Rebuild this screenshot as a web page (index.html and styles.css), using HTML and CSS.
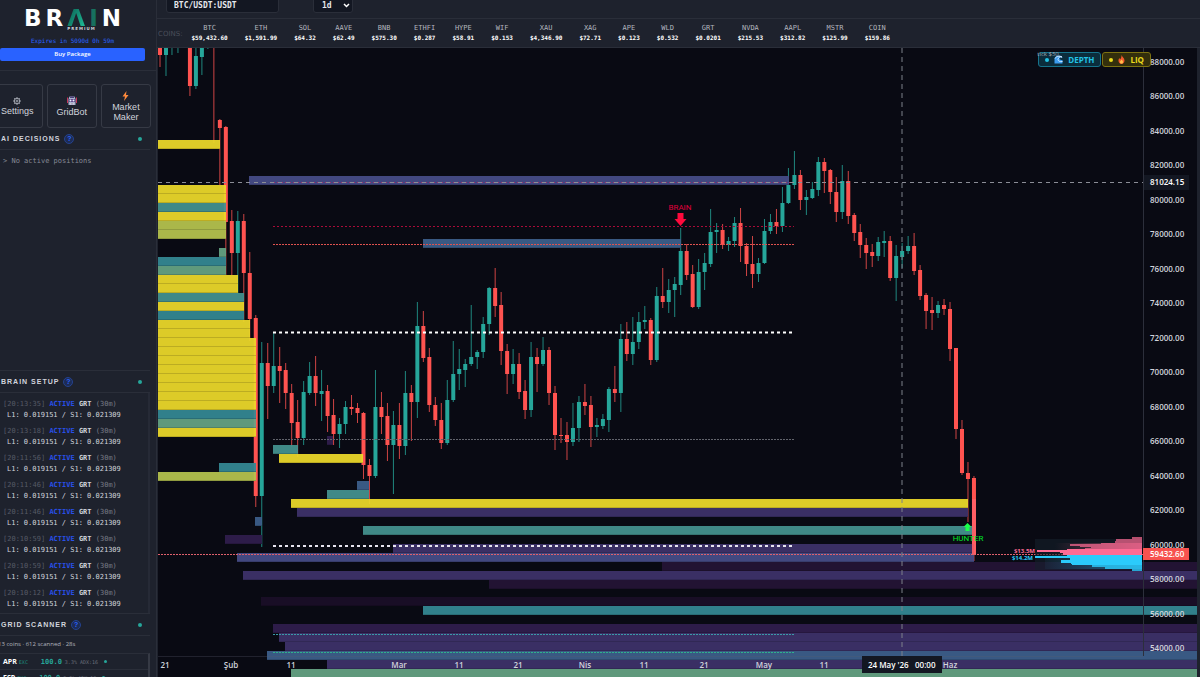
FILE: index.html
```html
<!DOCTYPE html>
<html lang="tr">
<head>
    <meta charset="UTF-8">
    <meta name="viewport" content="width=device-width, initial-scale=1.0">
    <title>BRAIN Premium</title>
    <link rel="stylesheet" href="styles.css">
</head>
<body>
    <aside class="sidebar">
        <div class="brand">
            <div class="logo"><span>B</span><span>R</span><span class="logo-accent">Λ</span><span class="logo-bar">I</span><span>N</span></div>
            <div class="logo-sub">PREMIUM</div>
            <div class="expires">Expires in 5090d 0h 59m</div>
            <button class="buy">Buy Package</button>
        </div>

        <div class="tools">
            <button class="tool">
                <svg width="8" height="8" viewBox="0 0 16 16"><circle cx="8" cy="8" r="5.5" fill="none" stroke="#c4c8d2" stroke-width="1.6"/><circle cx="8" cy="8" r="2" fill="none" stroke="#c4c8d2" stroke-width="1.4"/><path d="M8 0v2.5M8 13.500v2.500M0 8h2.500M13.500 8H16M2.300 2.300l1.800 1.800M11.900 11.900l1.800 1.800M2.300 13.700l1.800-1.800M11.900 4.100l1.800-1.800" stroke="#c4c8d2" stroke-width="1.400"/></svg>
                Settings
            </button>
            <button class="tool">
                <svg width="10" height="10" viewBox="0 0 20 20"><path d="M5 1h10l2 5v12H3V6z" fill="#a9b4cf"/><path d="M6 1h8v3H6z" fill="#4a3f78"/><rect x="4" y="6" width="12" height="6" rx="1" fill="#5b3d83"/><circle cx="7" cy="9" r="2" fill="#e8f2ff"/><circle cx="13" cy="9" r="2" fill="#e8f2ff"/><path d="M0 3h2v11H0zM18 3h2v11h-2z" fill="#c9335c"/><path d="M6 14h8v3H6z" fill="#f2f4fa"/><path d="M8 14v3M10 14v3M12 14v3" stroke="#54456f"/></svg>
                GridBot
            </button>
            <button class="tool">
                <svg width="7" height="10" viewBox="0 0 14 20"><path d="M9 0L1 11h5l-2 9 9-12H8z" fill="#ff8a3c"/></svg>
                Market Maker
            </button>
        </div>

        <section class="panel panel-grow">
            <h2>AI DECISIONS <button class="help">?</button><i class="dot"></i></h2>
            <p class="empty">&gt; No active positions</p>
        </section>

        <section class="panel">
            <h2>BRAIN SETUP <button class="help">?</button><i class="dot"></i></h2>
            <ul class="log">
                <li><time>[20:13:35]</time> <b class="active">ACTIVE</b> <b>GRT</b> <em>(30m)</em><span>L1: 0.019151 / S1: 0.021309</span></li>
                <li><time>[20:13:18]</time> <b class="active">ACTIVE</b> <b>GRT</b> <em>(30m)</em><span>L1: 0.019151 / S1: 0.021309</span></li>
                <li><time>[20:11:56]</time> <b class="active">ACTIVE</b> <b>GRT</b> <em>(30m)</em><span>L1: 0.019151 / S1: 0.021309</span></li>
                <li><time>[20:11:46]</time> <b class="active">ACTIVE</b> <b>GRT</b> <em>(30m)</em><span>L1: 0.019151 / S1: 0.021309</span></li>
                <li><time>[20:11:46]</time> <b class="active">ACTIVE</b> <b>GRT</b> <em>(30m)</em><span>L1: 0.019151 / S1: 0.021309</span></li>
                <li><time>[20:10:59]</time> <b class="active">ACTIVE</b> <b>GRT</b> <em>(30m)</em><span>L1: 0.019151 / S1: 0.021309</span></li>
                <li><time>[20:10:59]</time> <b class="active">ACTIVE</b> <b>GRT</b> <em>(30m)</em><span>L1: 0.019151 / S1: 0.021309</span></li>
                <li><time>[20:10:12]</time> <b class="active">ACTIVE</b> <b>GRT</b> <em>(30m)</em><span>L1: 0.019151 / S1: 0.021309</span></li>
            </ul>
        </section>

        <section class="panel panel-scan">
            <h2>GRID SCANNER <button class="help">?</button><i class="dot"></i></h2>
            <p class="summary">13 coins · 612 scanned · 28s</p>
            <ul class="scan">
                <li><b>APR</b><small>EXC</small><strong>100.0</strong><span>3.3% ADX:16</span><i class="dot"></i></li>
                <li><b>ESP</b><small>EXC</small><strong>100.0</strong><span>3.3% ADX:18</span><i class="dot"></i></li>
            </ul>
        </section>
    </aside>

    <main class="main">
        <div class="toolbar">
            <input class="symbol" type="text" value="BTC/USDT:USDT" aria-label="Symbol">
            <div class="select-wrap">
                <select class="interval" aria-label="Interval"><option>1d</option></select>
                <svg width="7" height="5" viewBox="0 0 7 5"><path d="M1 1l2.500 2.500L6 1" fill="none" stroke="#fff" stroke-width="1.500"/></svg>
            </div>
        </div>

        <div class="coins">
            <span class="coins-label">COINS:</span>
            <div class="coin">BTC<b>$59,432.60</b></div>
            <div class="coin">ETH<b>$1,591.99</b></div>
            <div class="coin">SOL<b>$64.32</b></div>
            <div class="coin">AAVE<b>$62.49</b></div>
            <div class="coin">BNB<b>$575.30</b></div>
            <div class="coin">ETHFI<b>$0.287</b></div>
            <div class="coin">HYPE<b>$58.91</b></div>
            <div class="coin">WIF<b>$0.153</b></div>
            <div class="coin">XAU<b>$4,346.90</b></div>
            <div class="coin">XAG<b>$72.71</b></div>
            <div class="coin">APE<b>$0.123</b></div>
            <div class="coin">WLD<b>$0.532</b></div>
            <div class="coin">GRT<b>$0.0201</b></div>
            <div class="coin">NVDA<b>$215.53</b></div>
            <div class="coin">AAPL<b>$312.82</b></div>
            <div class="coin">MSTR<b>$125.99</b></div>
            <div class="coin">COIN<b>$159.86</b></div>
        </div>

        <div class="chart">
            <svg id="chart" viewBox="158 48 1039 629" preserveAspectRatio="xMinYMin slice"></svg>
            <div class="overlay">
                <span class="tick">tick $50</span>
                <button class="toggle depth"><i></i><svg width="9" height="9" viewBox="0 0 18 18"><path d="M1 17V8c0-4 4-7 9-7 4 0 7 2 7 5-2-2-5-2-6 0-1 3 2 4 6 4v7z" fill="#3b9cf0"/><path d="M2 7c2-4 8-6 14-3-4-1-8 1-8 5 0 3 4 5 9 4" fill="none" stroke="#cfeaff" stroke-width="2"/></svg>DEPTH</button>
                <button class="toggle liq"><i></i><svg width="7" height="9" viewBox="0 0 14 18"><path d="M7 0c1 4 6 6 6 11 0 4-3 7-6 7s-6-3-6-7c0-2 1-4 2-5l1 3c2-2 3-5 3-9z" fill="#f4592b"/><path d="M7 9c2 2 3 3 3 5s-1 3-3 3-3-1-3-3 2-3 3-5z" fill="#ffc04a"/></svg>LIQ</button>
            </div>
        </div>
    </main>
    <script src="chart.js"></script>
</body>
</html>
```
FILE: styles.css
```css
* { box-sizing: border-box; }
body {
    margin: 0;
    height: 100vh;
    display: flex;
    overflow: hidden;
    background: #1e222d;
    color: #d1d4dc;
    font-family: "Liberation Sans", Arial, sans-serif;
}
button, input, select { font-family: inherit; margin: 0; }
h2, p, ul { margin: 0; padding: 0; }
ul { list-style: none; }

/* Sidebar */
.sidebar {
    width: 157px;
    flex-shrink: 0;
    display: flex;
    flex-direction: column;
    overflow: hidden;
    border-right: 1px solid #2a2e39;
}
.brand {
    height: 71px;
    padding: 9px 11px 0 0;
    border-bottom: 1px solid #2a2e39;
    text-align: center;
}
.logo {
    display: flex;
    justify-content: center;
    gap: 4px;
    font: bold 23px/18px "DejaVu Sans", sans-serif;
    color: #fff;
}
.logo-accent {
    background: linear-gradient(120deg, #0b5c50, #1fc09a);
    background-clip: text;
    color: transparent;
}
.logo-bar { color: #17705f; }
.logo-sub {
    font: bold 4px/4px "DejaVu Sans", sans-serif;
    letter-spacing: 1px;
    padding-left: 18px;
}
.expires {
    margin-top: 6px;
    font: 6px/8px "DejaVu Sans Mono", monospace;
    color: #2962ff;
}
.buy {
    display: block;
    width: 100%;
    height: 13px;
    margin-top: 3px;
    padding: 0;
    border: none;
    border-radius: 2px;
    background: #2962ff;
    color: #fff;
    font: 600 6px/13px "Open Sans", sans-serif;
}
.tools {
    display: grid;
    grid-template-columns: repeat(3, 1fr);
    gap: 4px;
    margin: 13px 5px 0 -8px;
}
.tool {
    display: flex;
    flex-direction: column;
    align-items: center;
    justify-content: center;
    gap: 1px;
    height: 44px;
    padding: 0 8px;
    border: 1px solid #363a45;
    border-radius: 3px;
    background: transparent;
    color: #d1d4dc;
    font-size: 9px;
    line-height: 10px;
}
.panel { margin-right: 6px; }
.panel-grow { flex: 1; }
.panel h2 {
    display: flex;
    align-items: center;
    gap: 4px;
    height: 22px;
    padding: 0 8px 0 1px;
    border-bottom: 1px solid #2a2e39;
    font-size: 7px;
    letter-spacing: 1px;
}
.panel + .panel { border-top: 1px solid #2a2e39; }
.help {
    width: 10px;
    height: 10px;
    padding: 0;
    border: 1px solid #24428f;
    border-radius: 50%;
    background: #1d2c55;
    color: #2962ff;
    font-size: 7px;
    font-weight: bold;
    line-height: 8px;
}
.dot {
    width: 4px;
    height: 4px;
    border-radius: 50%;
    background: #26a69a;
}
h2 .dot { margin-left: auto; }
.empty, .log { font: 7px/12px "DejaVu Sans Mono", monospace; }
.empty { padding: 5px 3px; color: #868a96; }
.log {
    height: 220px;
    padding-top: 5px;
    overflow: hidden;
    border-right: 2px solid #262a36;
}
.log li { height: 27px; padding-left: 3px; white-space: nowrap; }
.log time { color: #565a66; }
.log em { font-style: normal; color: #787b86; }
.log .active { color: #2950e8; }
.log span { display: block; padding-left: 4px; line-height: 11px; }
.panel-scan { height: 64px; overflow: hidden; }
.summary {
    margin-left: -2px;
    font: 6px/17px "Open Sans", sans-serif;
    color: #b2b5be;
}
.scan { border-top: 1px solid #2a2e39; border-right: 2px solid #363a45; }
.scan li {
    display: flex;
    align-items: center;
    height: 16px;
    padding-left: 3px;
    border-bottom: 1px solid #2a2e39;
    font: 5px/8px "DejaVu Sans Mono", monospace;
    color: #6a6e7a;
}
.scan b { font: bold 7px/8px "Open Sans", sans-serif; color: #fff; }
.scan small { width: 24px; padding-left: 2px; font-size: 5px; color: #1c8a7c; }
.scan strong { width: 24px; font-size: 7px; color: #26a69a; }
.scan .dot { width: 3px; height: 3px; margin-left: 6px; }

/* Top bars */
.main {
    flex: 1;
    min-width: 0;
    display: flex;
    flex-direction: column;
    font-family: "DejaVu Sans Mono", monospace;
}
.toolbar {
    display: flex;
    gap: 34px;
    height: 19px;
    padding-left: 9px;
    border-bottom: 1px solid #2a2e39;
}
.symbol, .interval {
    display: block;
    height: 20px;
    margin-top: -7px;
    border: 1px solid #2a2e39;
    border-radius: 3px;
    background: #131722;
    color: #e6e8ee;
    font-size: 8px;
    font-weight: bold;
}
.symbol { width: 113px; padding: 4px 7px 0; }
.select-wrap { position: relative; }
.interval {
    width: 40px;
    padding: 4px 0 0 8px;
    appearance: none;
}
.select-wrap svg { position: absolute; right: 3px; top: 3px; }
.coins {
    display: flex;
    align-items: center;
    gap: 17px;
    height: 29px;
    padding-left: 1px;
    border-bottom: 1px solid #2a2e39;
    white-space: nowrap;
}
.coins-label {
    margin: 2px -8px 0 0;
    font: 7px/8px "DejaVu Sans", sans-serif;
    color: #4a4e5a;
}
.coin {
    text-align: center;
    font-size: 7px;
    line-height: 10px;
    color: #b2b5be;
}
.coin b { display: block; font-size: 6px; color: #fff; }

/* Chart */
.chart {
    position: relative;
    flex: 1;
    min-height: 0;
    margin: 0 3px 0 1px;
    overflow: hidden;
    background: #090a13;
}
#chart { display: block; width: 100%; height: 100%; }
.axis-text { font: 600 8px "Open Sans", sans-serif; fill: #d1d4dc; }
.axis-active { fill: #fff; }
.marker { font: 8px Roboto, sans-serif; text-anchor: middle; }
.depth-sum { font: bold 6px "Open Sans", sans-serif; text-anchor: end; }
.overlay {
    position: absolute;
    top: 4px;
    right: 46px;
    display: flex;
    gap: 1px;
}
.tick {
    position: absolute;
    left: -1px;
    top: -2px;
    font: 6px/8px "Open Sans", sans-serif;
    color: #a2a6b0;
}
.toggle {
    display: flex;
    align-items: center;
    gap: 5px;
    height: 15px;
    padding: 0 6px;
    border: 1px solid;
    border-radius: 3px;
    font: bold 8px/12px "Open Sans", sans-serif;
}
.toggle i { width: 4px; height: 4px; border-radius: 50%; background: currentColor; }
.depth { background: #0b2d3c; border-color: #16738c; color: #22c3e6; }
.liq { background: #332f0c; border-color: #7d7212; color: #eadb1c; }
```
FILE: chart.js
```js
const svg = document.getElementById('chart');
const NS = 'http://www.w3.org/2000/svg';

const UP = '#26a69a';
const DOWN = '#ff5350';
const C = {
    yellow: '#ebd829', olive: '#b5c24e', green: '#65a383', teal: '#44928e', cyan: '#348893',
    blue: '#3d5f8a', indigo: '#464c87', violet: '#3e3269', plum: '#301e4c', dark: '#241435', faint: '#1b0f27'
};

// one row per day: direction, high, body top, body bottom, low
const candles = `
d 40 40 55 67|u 40 40 55 76|u 40 40 40 55|u 40 40 40 53|u 40 40 40 41|d 40 40 86 96|u 40 56 86 89|u 40 40 57 75|u 40 40 40 49|d 40 40 121 143
d 119 120 128 185|d 126 127 222 275|d 210 221 253 275|u 211 221 253 294|d 214 221 273 322|d 252 273 319 341|d 315 318 496 507|u 342 363 496 547|d 343 363 386 419|u 332 366 386 393
d 347 366 371 403|d 363 370 393 409|d 384 393 423 447|d 400 422 438 457|u 381 392 438 445|u 362 376 393 395|d 356 376 393 406|u 370 391 394 421|d 385 391 416 432|d 399 415 434 445
u 418 424 434 448|u 401 407 424 434|d 395 407 409 415|d 403 408 413 423|d 412 413 465 479|d 459 465 476 504|u 370 407 476 478|d 392 407 417 434|d 403 416 445 461|u 411 425 445 494
d 403 425 446 459|u 371 393 446 455|d 385 393 402 441|u 302 326 402 418|d 311 326 358 362|d 348 357 405 412|d 397 405 420 426|d 403 420 443 449|u 380 400 443 445|u 341 374 400 402
u 349 369 374 390|u 359 364 370 387|u 305 357 364 366|u 350 352 357 369|u 317 324 352 358|u 287 288 324 335|d 268 288 306 317|d 292 305 351 365|d 344 351 374 394|u 349 364 374 384
d 353 364 392 399|d 380 391 410 419|u 342 357 410 417|d 348 357 364 392|u 337 350 364 366|d 347 350 393 405|d 386 393 435 450|d 418 435 436 443|d 422 435 442 460|u 403 428 442 446
u 396 402 428 442|d 384 402 406 415|d 396 405 427 447|u 418 425 427 437|u 414 419 426 429|u 387 389 420 432|d 366 389 393 402|u 324 339 393 412|d 322 339 354 361|u 317 342 354 365
u 312 322 342 349|u 306 320 322 329|d 318 320 360 365|u 287 296 360 362|d 268 296 302 308|u 279 290 302 313|u 277 284 290 317|u 228 251 285 295|d 244 251 275 280|d 265 274 307 308
u 259 272 307 309|u 253 263 272 290|u 209 232 264 267|u 223 230 232 253|d 224 230 245 249|u 237 241 244 251|u 217 223 241 247|d 208 223 246 262|d 243 246 264 276|d 236 264 274 288
u 258 263 274 282|u 219 231 263 264|u 214 222 231 234|d 209 222 226 234|u 187 203 226 232|u 168 185 203 204|u 151 175 185 189|d 170 175 200 210|u 190 197 200 215|u 182 189 198 199
u 157 162 190 196|d 158 162 171 193|d 169 170 192 204|d 177 192 212 222|u 165 181 212 219|d 171 181 216 224|d 213 215 233 241|d 224 232 245 258|d 238 245 253 269|d 244 252 256 267
u 237 242 256 261|u 231 241 243 257|d 236 241 278 281|u 245 256 278 301|u 243 251 257 268|u 236 246 251 254|d 233 246 271 275|d 265 270 296 300|d 293 295 311 329|d 297 310 313 330
u 301 305 313 318|d 299 305 309 315|d 302 309 349 361|d 348 348 429 439|d 420 429 473 475|d 462 473 479 522|d 476 478 555 561
`.trim().split(/[|\n]/).map(row => row.split(' '));

// liquidation levels: colour, x from, x to, y, rows
const bands = [
    ['yellow', 158, 220, 140, 1], ['indigo', 249, 789, 176, 1], ['yellow', 158, 226, 185, 2],
    ['teal', 158, 226, 203, 1], ['yellow', 158, 226, 212, 1], ['olive', 158, 226, 221, 2],
    ['blue', 423, 681, 239, 1], ['green', 219, 226, 248, 1], ['cyan', 158, 226, 257, 1],
    ['green', 158, 226, 266, 1], ['yellow', 158, 238, 275, 2], ['teal', 158, 244, 293, 1],
    ['yellow', 158, 244, 302, 1], ['cyan', 158, 244, 311, 1], ['yellow', 158, 250, 320, 2],
    ['yellow', 158, 256, 338, 8], ['cyan', 158, 256, 410, 1], ['green', 158, 256, 419, 1],
    ['yellow', 158, 256, 428, 1], ['plum', 327, 333, 436, 1], ['teal', 273, 298, 445, 1],
    ['yellow', 279, 363, 454, 1], ['cyan', 219, 256, 463, 1], ['olive', 158, 256, 472, 1],
    ['blue', 357, 369, 481, 1], ['teal', 327, 369, 490, 1], ['yellow', 291, 968, 499, 1],
    ['violet', 297, 968, 508, 1], ['blue', 255, 262, 517, 1], ['teal', 363, 974, 526, 1],
    ['plum', 225, 262, 535, 1], ['violet', 393, 974, 544, 1], ['indigo', 237, 974, 553, 1],
    ['dark', 662, 1197, 562, 1], ['violet', 243, 1197, 571, 1], ['dark', 489, 1197, 580, 1],
    ['faint', 261, 1197, 597, 1], ['cyan', 423, 1197, 606, 1], ['plum', 273, 1197, 624, 1],
    ['violet', 279, 1197, 633, 1], ['violet', 285, 1197, 642, 1], ['blue', 267, 1197, 651, 1],
    ['violet', 327, 1197, 660, 1], ['green', 291, 1197, 669, 1]
];

// order book depth: y, height, left edge
const asks = [[537, 2, 1132], [539, 2, 1116], [541, 2, 1115], [543, 1, 1101], [544, 2, 1070], [546, 1, 1080], [547, 1, 1091], [548, 1, 1085], [549, 1, 1067], [550, 2, 1037], [552, 1, 1060], [553, 2, 1063]];
const bids = [[555, 1, 1067], [556, 2, 1035], [558, 2, 1070], [560, 3, 1061], [563, 1, 1071], [564, 1, 1072], [565, 2, 1092], [567, 2, 1105], [569, 2, 1132]];

const times = [[165, '21'], [231, 'Şub'], [291, '11'], [399, 'Mar'], [459, '11'], [518, '21'], [585, 'Nis'], [644, '11'], [704, '21'], [764, 'May'], [824, '11'], [950, 'Haz']];

function add(tag, attrs, text) {
    const el = document.createElementNS(NS, tag);
    for (const key in attrs) el.setAttribute(key, attrs[key]);
    if (text) el.textContent = text;
    svg.appendChild(el);
    return el;
}

function rect(x, y, width, height, fill, opacity = 1) {
    add('rect', { x, y, width, height, fill, opacity });
}

function line(x1, y1, x2, y2, stroke, dash, width = 1) {
    add('line', { x1, y1, x2, y2, stroke, 'stroke-width': width, 'stroke-dasharray': dash });
}

function drawCandles() {
    candles.forEach(([dir, high, top, bottom, low], i) => {
        const x = 160 + i * 5.985;
        const color = dir === 'u' ? UP : DOWN;
        rect(x - 0.5, +high, 1, low - high, color, 0.8);
        if (bottom > top) rect(x - 2, +top, 4, bottom - top, color);
    });
}

function drawBands() {
    bands.forEach(([color, from, to, y, rows]) => {
        for (let i = 0; i < rows; i++) {
            rect(from, y + i * 9, to - from, 9, C[color], 0.94);
            line(from, y + i * 9 + 8.5, to, y + i * 9 + 8.5, 'rgba(0,0,0,0.15)', 'none');
        }
    });
    // the latest candle stays visible through the levels
    rect(972, 499, 4, 56, '#ff5f66', 0.9);
}

function drawLevels() {
    line(273, 182.5, 794, 182.5, '#a03070', '2 2');
    line(273, 226.5, 794, 226.5, '#a80c38', '2 2');
    line(273, 244.5, 794, 244.5, '#e0524f', '2 1');
    line(273, 332.5, 794, 332.5, '#fff', '3 3', 2);
    line(273, 439.5, 794, 439.5, '#62646c', '2 1');
    line(273, 546, 794, 546, '#e6e4ee', '3 3', 2);
    line(273, 634.5, 794, 634.5, '#3a9aa8', '2 1');
    line(273, 652.5, 794, 652.5, '#2fb08c', '2 1');
    line(158, 554.5, 1143, 554.5, '#e0606c', '2 1');
}

function drawMarkers() {
    add('text', { x: 680, y: 210, fill: '#e0003c', class: 'marker' }, 'BRAIN');
    add('path', { d: 'M677.500 213h6v6h3l-6 7-6-7h3z', fill: '#ff0a3c' });
    add('text', { x: 968, y: 541, fill: '#00e626', class: 'marker' }, 'HUNTER');
    add('path', { d: 'M967.500 523l4 4h-2v4h-4v-4h-2z', fill: '#1aff4a' });
}

function drawDepth() {
    const defs = add('defs', {});
    defs.innerHTML = '<linearGradient id="ask"><stop offset="0" stop-color="#ff6b94" stop-opacity="0"/><stop offset="1" stop-color="#ff6b94" stop-opacity="0.5"/></linearGradient>' +
        '<linearGradient id="bid"><stop offset="0" stop-color="#29b6e8" stop-opacity="0.05"/><stop offset="1" stop-color="#29b6e8" stop-opacity="0.5"/></linearGradient>';
    rect(1035, 539, 107, 31, '#16202c', 0.6);
    rect(1055, 543, 87, 12, 'url(#ask)');
    rect(1045, 555, 97, 14, 'url(#bid)');
    asks.forEach(([y, h, x]) => rect(x, y, 1142 - x, h, '#ff6b94', y < 549 ? 0.7 : 1));
    bids.forEach(([y, h, x]) => rect(x, y, 1142 - x, h, '#2bcbfb', y > 564 ? 0.8 : 1));
    add('text', { x: 1035, y: 553, fill: '#ff6b94', class: 'depth-sum' }, '$13.5M');
    add('text', { x: 1033, y: 560, fill: '#2bcbfb', class: 'depth-sum' }, '$14.2M');
}

function drawAxes() {
    line(1143.5, 48, 1143.5, 656, '#2c2f3b', 'none');
    line(158, 656.5, 1143, 656.5, 'rgba(90,94,110,0.3)', 'none');
    for (let price = 88000; price >= 54000; price -= 2000) {
        const y = 64.5 + (88000 - price) / 2000 * 34.5;
        add('text', { x: 1150, y, class: 'axis-text' }, price.toFixed(2));
    }
    times.forEach(([x, label]) => {
        add('text', { x, y: 668, class: 'axis-text', 'text-anchor': 'middle' }, label);
    });
}

function drawCrosshair() {
    line(902, 48, 902, 656, '#7d808a', '5 4');
    line(158, 182.5, 1143, 182.5, '#8b8d96', '4 4');
    rect(1144, 175, 45, 15, '#131722');
    add('text', { x: 1150, y: 185, class: 'axis-text axis-active' }, '81024.15');
    rect(1143, 548, 46, 12, '#f7524f');
    add('text', { x: 1150, y: 557, class: 'axis-text axis-active' }, '59432.60');
    rect(862, 656, 80, 17, '#131722');
    add('text', { x: 868, y: 668, class: 'axis-text axis-active' }, "24 May '26");
    add('text', { x: 915, y: 668, class: 'axis-text axis-active' }, '00:00');
}

drawCandles();
drawBands();
drawLevels();
drawDepth();
drawMarkers();
drawAxes();
drawCrosshair();
```
